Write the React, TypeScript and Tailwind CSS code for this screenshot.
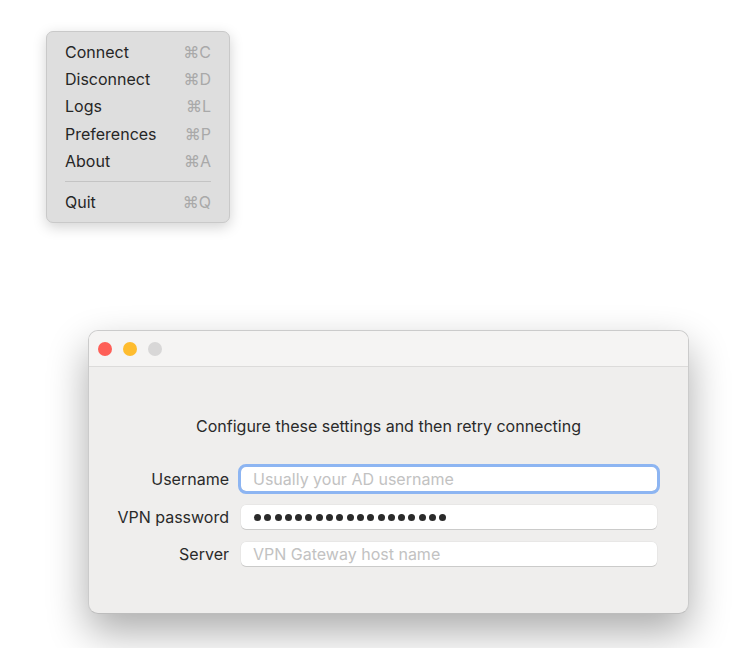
import React from "react";

const items: [string, string][] = [
  ["Connect", "C"],
  ["Disconnect", "D"],
  ["Logs", "L"],
  ["Preferences", "P"],
  ["About", "A"],
];

function Row({ label, k }: { label: string; k: string }) {
  return (
    <div className="flex h-[27.3px] items-center justify-between px-[18px]">
      <span className="text-[16px] text-[#262626]">{label}</span>
      <span className="text-[16px] text-[#a9a9a9]">⌘{k}</span>
    </div>
  );
}

function Field({ placeholder, focused }: { placeholder: string; focused?: boolean }) {
  return (
    <div
      className={
        "flex h-[24px] w-[416px] items-center rounded-[5px] bg-white pl-[12px] shadow-[0_1px_0_rgba(0,0,0,0.12),0_0_0_0.5px_rgba(0,0,0,0.06)] " +
        (focused ? "outline-[3px] outline-solid outline-[#8db5f2]" : "")
      }
    >
      <span className="text-[16px] text-[#c2c2c2]">{placeholder}</span>
    </div>
  );
}

export default function App() {
  return (
    <div
      className="flex h-[648px] w-[738px] flex-col overflow-hidden bg-white pl-[46px] pt-[31px]"
      style={{ fontFamily: "Inter, 'Liberation Sans', sans-serif" }}
    >
      <div className="flex h-[192px] w-[184px] shrink-0 flex-col rounded-[7px] border border-[#c9c9c9] bg-[#dedede] pt-[6px] shadow-[0_4px_14px_rgba(0,0,0,0.18)]">
        {items.map(([l, k]) => (
          <Row key={l} label={l} k={k} />
        ))}
        <div className="mx-[18px] mt-[7px] h-px bg-[#c4c4c4]" />
        <div className="mt-[6px]">
          <Row label="Quit" k="Q" />
        </div>
      </div>

      <div className="ml-[42px] mt-[107px] flex h-[284px] w-[601px] shrink-0 flex-col overflow-hidden rounded-[10px] border border-[#cbcbcb] border-b-[#bdbdbd] bg-[#efeeed] shadow-[0_18px_40px_rgba(0,0,0,0.33)]">
        <div className="flex h-[36px] shrink-0 items-center gap-[11px] border-b border-[#dcdbda] bg-[#f5f4f3] pl-[9px]">
          <div className="h-[14px] w-[14px] rounded-full bg-[#fe5f57]" />
          <div className="h-[14px] w-[14px] rounded-full bg-[#febc2e]" />
          <div className="h-[14px] w-[14px] rounded-full bg-[#d8d7d7]" />
        </div>
        <div className="flex flex-col">
          <div className="mt-[47px] text-center text-[16px] text-[#2a2a2a]">
            Configure these settings and then retry connecting
          </div>
          <div className="mt-[29px] flex flex-col gap-[13px]">
            <div className="flex items-center">
              <span className="w-[140px] text-right text-[16px] text-[#2a2a2a]">Username</span>
              <div className="ml-[12px]">
                <Field placeholder="Usually your AD username" focused />
              </div>
            </div>
            <div className="mt-px flex items-center">
              <span className="w-[140px] text-right text-[16px] text-[#2a2a2a]">VPN password</span>
              <div className="ml-[12px] flex h-[24px] w-[416px] items-center gap-[3.3px] rounded-[5px] bg-white pl-[13px] shadow-[0_1px_0_rgba(0,0,0,0.12),0_0_0_0.5px_rgba(0,0,0,0.06)]">
                {Array.from({ length: 19 }).map((_, i) => (
                  <div key={i} className="h-[7px] w-[7px] shrink-0 rounded-full bg-[#2a2a2a]" />
                ))}
              </div>
            </div>
            <div className="flex items-center">
              <span className="w-[140px] text-right text-[16px] text-[#2a2a2a]">Server</span>
              <div className="ml-[12px]">
                <Field placeholder="VPN Gateway host name" />
              </div>
            </div>
          </div>
        </div>
      </div>
    </div>
  );
}
